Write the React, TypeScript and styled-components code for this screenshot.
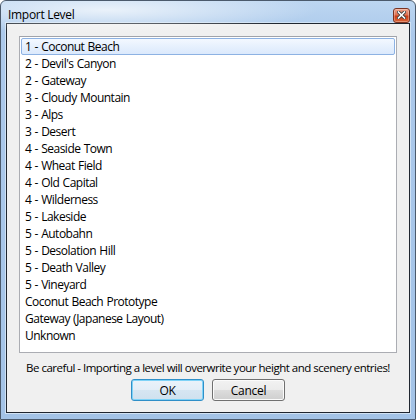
import React from "react";
import styled, { createGlobalStyle } from "styled-components";

const Global = createGlobalStyle`
  html, body { margin: 0; padding: 0; background: #ffffff; }
  * { box-sizing: border-box; }
`;

const Window = styled.div`
  width: 416px;
  height: 420px;
  border: 1px solid #4b5a6c;
  border-radius: 6px 6px 0 0;
  background: linear-gradient(180deg, #bcd6f1 0%, #acc9eb 8%, #a3c3e7 100%);
  padding: 0 5px 6px 5px;
  display: flex;
  flex-direction: column;
  font-family: "Open Sans", "Noto Sans", sans-serif;
  position: relative;
  overflow: hidden;
`;

const Glow = styled.div`
  position: absolute;
  left: -10px;
  top: -14px;
  width: 330px;
  height: 46px;
  background: radial-gradient(ellipse at 35% 50%, rgba(255,255,255,0.7) 0%, rgba(255,255,255,0.3) 40%, rgba(255,255,255,0) 70%);
  pointer-events: none;
`;

const TitleBar = styled.div`
  height: 22px;
  display: flex;
  align-items: center;
  justify-content: space-between;
  padding-left: 2px;
  position: relative;
`;

const Title = styled.span`
  font-size: 12px;
  color: #000;
  letter-spacing: -0.3px;
  margin-top: 4px;
`;

const CloseButton = styled.div`
  width: 17px;
  height: 15px;
  margin-top: 6px;
  margin-right: 0;
  border: 1px solid #7a3322;
  border-radius: 3px;
  background: linear-gradient(180deg, #eda18a 0%, #df7152 45%, #c93d18 55%, #db6436 100%);
  box-shadow: inset 0 0 0 1px rgba(255,255,255,0.3);
  display: flex;
  align-items: center;
  justify-content: center;
`;

const Client = styled.div`
  flex: 1;
  border: 1px solid #1f2630;
  background: #f0f0f0;
  padding: 12px 12px 0 12px;
  display: flex;
  flex-direction: column;
  box-shadow: 0 0 0 1px #d0e2f4;
`;

const ListBox = styled.div`
  height: 317px;
  flex-shrink: 0;
  border: 1px solid #abadb3;
  border-top-color: #a0a3aa;
  background: #ffffff;
  padding: 1px 1px;
  display: flex;
  flex-direction: column;
`;

const Item = styled.div<{ $selected?: boolean }>`
  height: 17px;
  line-height: 16px;
  font-size: 12px;
  color: #000;
  padding-left: 3px;
  white-space: nowrap;
  letter-spacing: -0.5px;
  word-spacing: 0.6px;
  border: 1px solid ${(p) => (p.$selected ? "#8db2e3" : "transparent")};
  border-radius: 2px;
  background: ${(p) =>
    p.$selected ? "linear-gradient(180deg, #f3f8ff 0%, #e4effd 60%, #dbe9fc 100%)" : "transparent"};
`;

const Warning = styled.div`
  margin-top: 7px;
  text-align: center;
  font-size: 11.5px;
  line-height: 15px;
  color: #000;
  letter-spacing: -0.5px;
  white-space: nowrap;
`;

const ButtonRow = styled.div`
  margin-top: 4px;
  display: flex;
  justify-content: center;
  gap: 8px;
`;

const Button = styled.button<{ $default?: boolean }>`
  width: 73px;
  height: 22px;
  padding: 0;
  font-family: "Open Sans", "Noto Sans", sans-serif;
  font-size: 12px;
  letter-spacing: -0.3px;
  color: #000;
  border-radius: 3px;
  border: 1px solid ${(p) => (p.$default ? "#2f8fc8" : "#707070")};
  box-shadow: inset 0 0 0 1px ${(p) => (p.$default ? "#7fd3f7" : "#fbfbfb")};
  background: ${(p) =>
    p.$default
      ? "linear-gradient(180deg, #eaf3fa 0%, #e3eef7 50%, #d6e6f2 50%, #cfe1ee 100%)"
      : "linear-gradient(180deg, #f2f2f2 0%, #ebebeb 50%, #dddddd 50%, #cfcfcf 100%)"};
`;

const levels = [
  "1 - Coconut Beach",
  "2 - Devil's Canyon",
  "2 - Gateway",
  "3 - Cloudy Mountain",
  "3 - Alps",
  "3 - Desert",
  "4 - Seaside Town",
  "4 - Wheat Field",
  "4 - Old Capital",
  "4 - Wilderness",
  "5 - Lakeside",
  "5 - Autobahn",
  "5 - Desolation Hill",
  "5 - Death Valley",
  "5 - Vineyard",
  "Coconut Beach Prototype",
  "Gateway (Japanese Layout)",
  "Unknown",
];

export default function App() {
  return (
    <>
      <Global />
      <Window>
        <Glow />
        <TitleBar>
          <Title>Import Level</Title>
          <CloseButton>
            <svg width="9" height="8" viewBox="0 0 9 8">
              <path d="M1.5 1 L7.5 7 M7.5 1 L1.5 7" stroke="#3a3a3a" strokeWidth="3.2" strokeLinecap="square" />
              <path d="M1.5 1 L7.5 7 M7.5 1 L1.5 7" stroke="#ffffff" strokeWidth="1.6" strokeLinecap="square" />
            </svg>
          </CloseButton>
        </TitleBar>
        <Client>
          <ListBox>
            {levels.map((l, i) => (
              <Item key={l} $selected={i === 0}>
                {l}
              </Item>
            ))}
          </ListBox>
          <Warning>Be careful - Importing a level will overwrite your height and scenery entries!</Warning>
          <ButtonRow>
            <Button $default>OK</Button>
            <Button>Cancel</Button>
          </ButtonRow>
        </Client>
      </Window>
    </>
  );
}
